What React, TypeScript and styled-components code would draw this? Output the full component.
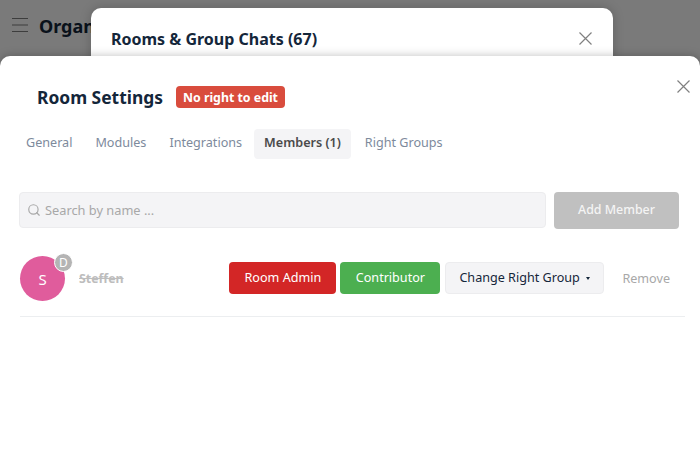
import React from "react";
import styled, { createGlobalStyle } from "styled-components";
import { Search } from "lucide-react";

const GlobalStyle = createGlobalStyle`
  html, body {
    margin: 0;
    height: 100%;
    overflow: hidden;
    background: #fff;
    font-family: "Noto Sans", "Open Sans", sans-serif;
  }
  * {
    box-sizing: border-box;
  }
`;

const Page = styled.div`
  position: relative;
  width: 700px;
  height: 475px;
  overflow: hidden;
  background: #fff;
`;

const PageHeader = styled.header`
  display: flex;
  align-items: center;
  gap: 11px;
  height: 51px;
  padding-left: 12px;
`;

const MenuIcon = styled.svg`
  width: 16px;
  height: 16px;
  margin-bottom: 2px;
  color: #808080;
`;

const PageTitle = styled.h1`
  margin: 0;
  font-size: 18px;
  font-weight: 700;
  color: #14263a;
`;

const Overlay = styled.div`
  position: absolute;
  inset: 0;
  background: rgba(0, 0, 0, 0.52);
`;

const BackModal = styled.section`
  position: absolute;
  top: 8px;
  left: 91px;
  width: 522px;
  height: 200px;
  padding: 19px 20px 0;
  border-radius: 10px;
  background: #fff;
  box-shadow: 0 0 12px rgba(0, 0, 0, 0.2);
`;

const BackTitle = styled.h2`
  margin: 0;
  font-size: 16px;
  line-height: 24px;
  font-weight: 700;
  color: #14263a;
`;

const CloseButton = styled.button<{ $top: number; $right: number }>`
  position: absolute;
  top: ${({ $top }) => $top}px;
  right: ${({ $right }) => $right}px;
  width: 13px;
  height: 13px;
  padding: 0;
  border: 0;
  background: none;
  color: #808080;
  display: flex;
`;

const FrontModal = styled.section`
  position: absolute;
  top: 56px;
  left: 0;
  right: 0;
  bottom: 0;
  padding: 0 15px 0 19px;
  border-radius: 10px 10px 0 0;
  background: #fff;
  box-shadow: 0 0 10px rgba(0, 0, 0, 0.25);
`;

const TitleRow = styled.div`
  display: flex;
  align-items: center;
  gap: 13px;
  height: 52px;
  margin-top: 15px;
  padding-left: 18px;
`;

const ModalTitle = styled.h2`
  margin: 0;
  font-size: 17.4px;
  font-weight: 700;
  color: #14263a;
`;

const StatusBadge = styled.span`
  display: flex;
  align-items: center;
  height: 22px;
  padding: 0 7px;
  border-radius: 4px;
  background: #d94c3d;
  color: #fff;
  font-size: 12.35px;
  font-weight: 700;
`;

const Tabs = styled.nav`
  display: flex;
  margin: 6px 0 0 -3px;
  gap: 3px;
`;

const Tab = styled.a<{ $active?: boolean }>`
  display: flex;
  align-items: center;
  height: 30px;
  margin: ${({ $active }) => ($active ? "0 1px 0 -1px" : "0")};
  padding: 0 10px 3px;
  border-radius: 4px;
  font-size: 12.6px;
  font-weight: ${({ $active }) => ($active ? 600 : 400)};
  color: ${({ $active }) => ($active ? "#4a4a4a" : "#7d8a9c")};
  background: ${({ $active }) => ($active ? "#f4f4f6" : "transparent")};
`;

const SearchRow = styled.div`
  display: flex;
  gap: 8px;
  margin-top: 33px;
  padding-right: 6px;
`;

const SearchBox = styled.label`
  flex: 1;
  display: flex;
  align-items: center;
  gap: 4px;
  height: 36px;
  padding-left: 7px;
  border: 1px solid #ececee;
  border-radius: 4px;
  background: #f4f4f6;
  color: #a8a8a8;
  font-size: 12.8px;
`;

const AddButton = styled.button`
  width: 125px;
  height: 37px;
  padding: 0 0 3px;
  border: 0;
  border-radius: 4px;
  background: #c0c0c0;
  color: #f4f4f4;
  font-family: inherit;
  font-size: 12.4px;
  font-weight: 500;
`;

const MemberRow = styled.div`
  display: flex;
  align-items: center;
  height: 71px;
  margin: 17px 0 0 1px;
  padding-bottom: 6px;
  border-bottom: 1px solid #eceef0;
`;

const Avatar = styled.div`
  position: relative;
  flex: none;
  display: flex;
  align-items: center;
  justify-content: center;
  width: 45px;
  height: 45px;
  margin-top: 1px;
  border-radius: 50%;
  background: #e05c9c;
  color: #fff;
  font-size: 15px;
`;

const AvatarBadge = styled.span`
  position: absolute;
  top: -3px;
  right: -8px;
  display: flex;
  align-items: center;
  justify-content: center;
  width: 19px;
  height: 19px;
  border: 1px solid #fff;
  border-radius: 50%;
  background: #b4b4b4;
  color: #fff;
  font-size: 12px;
`;

const MemberName = styled.span`
  margin-left: 14px;
  flex: 1;
  font-size: 12.4px;
  font-weight: 700;
  color: #bdbdbd;
  text-decoration: line-through;
`;

const RoleButton = styled.button<{ $color: string; $width: number; $gap: number }>`
  width: ${({ $width }) => $width}px;
  height: 32px;
  margin-right: ${({ $gap }) => $gap}px;
  padding: 0 0 2px;
  border: 0;
  border-radius: 4px;
  background: ${({ $color }) => $color};
  color: #fff;
  font-family: inherit;
  font-size: 12.6px;
`;

const GroupButton = styled.button`
  display: flex;
  align-items: center;
  gap: 6px;
  width: 159px;
  height: 32px;
  padding: 0 0 2px 13px;
  border: 1px solid #ececee;
  border-radius: 4px;
  background: #f4f4f6;
  color: #14263a;
  font-family: inherit;
  font-size: 12.6px;
`;

const Caret = styled.span`
  width: 0;
  height: 0;
  margin-top: 2px;
  border-left: 2px solid transparent;
  border-right: 2px solid transparent;
  border-top: 3px solid #14263a;
`;

const RemoveButton = styled.button`
  height: 32px;
  margin-left: 18px;
  padding: 0 15px 0 0;
  border: 0;
  background: none;
  color: #a8a8a8;
  font-family: inherit;
  font-size: 12.6px;
`;

const Cross = () => (
  <svg width="13" height="13" viewBox="0 0 13 13" fill="none" stroke="currentColor" strokeWidth="1.2">
    <path d="M0.5 0.5 12.5 12.5M12.5 0.5 0.5 12.5" />
  </svg>
);

const tabs = ["General", "Modules", "Integrations", "Members (1)", "Right Groups"];

export default function App() {
  return (
    <Page>
      <GlobalStyle />
      <PageHeader>
        <MenuIcon viewBox="0 0 16 16" fill="none" stroke="currentColor" strokeWidth="1.2">
          <path d="M0 1.5h16M0 8h16M0 14.5h16" />
        </MenuIcon>
        <PageTitle>Organization</PageTitle>
      </PageHeader>
      <Overlay />
      <BackModal>
        <BackTitle>Rooms &amp; Group Chats (67)</BackTitle>
        <CloseButton $top={24} $right={21}>
          <Cross />
        </CloseButton>
      </BackModal>
      <FrontModal>
        <CloseButton $top={24} $right={10}>
          <Cross />
        </CloseButton>
        <TitleRow>
          <ModalTitle>Room Settings</ModalTitle>
          <StatusBadge>No right to edit</StatusBadge>
        </TitleRow>
        <Tabs>
          {tabs.map((t) => (
            <Tab key={t} $active={t === "Members (1)"}>
              {t}
            </Tab>
          ))}
        </Tabs>
        <SearchRow>
          <SearchBox>
            <Search size={14} />
            Search by name ...
          </SearchBox>
          <AddButton>Add Member</AddButton>
        </SearchRow>
        <MemberRow>
          <Avatar>
            S<AvatarBadge>D</AvatarBadge>
          </Avatar>
          <MemberName>Steffen</MemberName>
          <RoleButton $color="#d32626" $width={107} $gap={4}>
            Room Admin
          </RoleButton>
          <RoleButton $color="#4caf50" $width={100} $gap={5}>
            Contributor
          </RoleButton>
          <GroupButton>
            Change Right Group
            <Caret />
          </GroupButton>
          <RemoveButton>Remove</RemoveButton>
        </MemberRow>
      </FrontModal>
    </Page>
  );
}
